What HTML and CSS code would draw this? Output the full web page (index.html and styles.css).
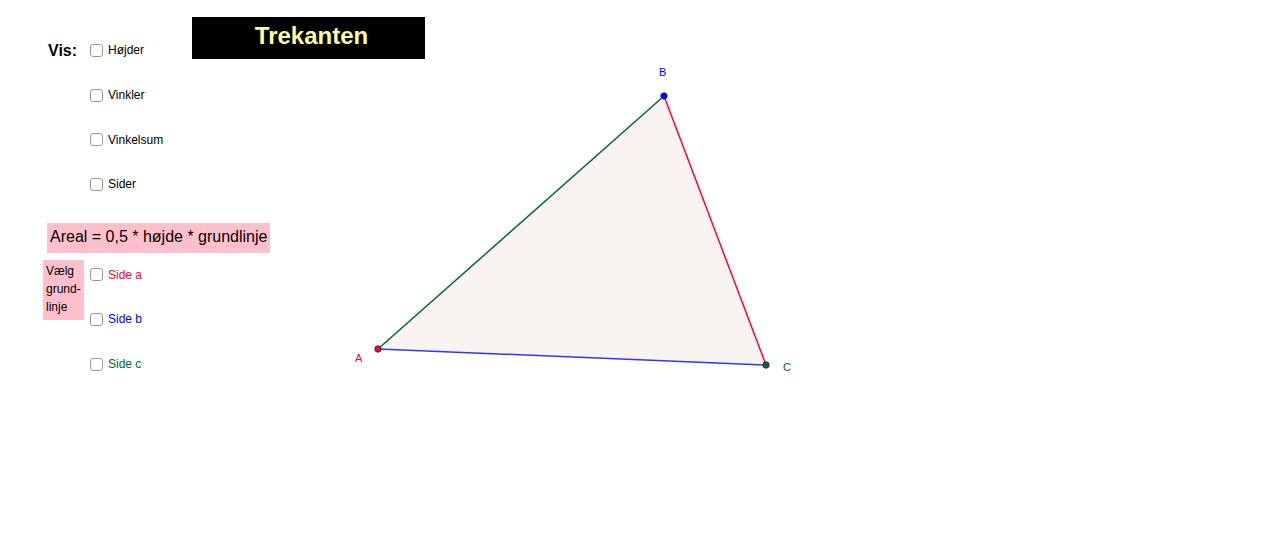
FILE: index.html
```html
<!DOCTYPE html>
<html lang="da">
<head>
<meta charset="utf-8">
<title>Trekanten</title>
<link rel="stylesheet" href="styles.css">
</head>
<body>
<div class="canvas">
  <div class="panel">
    <div class="vis-row">
      <div class="vis-label">Vis:</div>
      <div class="checklist">
        <label class="cb-row"><span class="box"></span><span class="cb-text">Højder</span></label>
        <label class="cb-row"><span class="box"></span><span class="cb-text">Vinkler</span></label>
        <label class="cb-row"><span class="box"></span><span class="cb-text">Vinkelsum</span></label>
        <label class="cb-row"><span class="box"></span><span class="cb-text">Sider</span></label>
      </div>
    </div>
    <div class="formula">Areal = 0,5 * højde * grundlinje</div>
    <div class="base-row">
      <div class="base-label">Vælg<br>grund-<br>linje</div>
      <div class="checklist sides">
        <label class="cb-row"><span class="box"></span><span class="cb-text red">Side a</span></label>
        <label class="cb-row"><span class="box"></span><span class="cb-text blue">Side b</span></label>
        <label class="cb-row"><span class="box"></span><span class="cb-text green">Side c</span></label>
      </div>
    </div>
  </div>
  <div class="title">Trekanten</div>
  <svg class="figure" width="1280" height="548" viewBox="0 0 1280 548">
    <polygon points="378,349 664,96 766,365" fill="#f9f4f2" stroke="none"/>
    <line x1="378" y1="349" x2="664" y2="96" stroke="#006633" stroke-width="1.5"/>
    <line x1="664" y1="96" x2="766" y2="365" stroke="#ff0033" stroke-width="1.5"/>
    <line x1="766" y1="365" x2="378" y2="349" stroke="#3333ff" stroke-width="1.5"/>
    <circle cx="378" cy="349" r="3.2" fill="#ff0033" stroke="#333" stroke-width="1"/>
    <circle cx="664" cy="96" r="3.2" fill="#0000ff" stroke="#333" stroke-width="1"/>
    <circle cx="766" cy="365" r="3.2" fill="#006633" stroke="#333" stroke-width="1"/>
    <text x="659" y="76" class="pt-label" fill="#0000ff">B</text>
    <text x="355" y="362" class="pt-label" fill="#ff0033">A</text>
    <text x="783" y="371" class="pt-label" fill="#006633">C</text>
  </svg>
</div>
</body>
</html>
```
FILE: styles.css
```css
html, body {
  margin: 0;
  padding: 0;
  background: #ffffff;
}
body {
  font-family: "Liberation Sans", Arial, sans-serif;
  color: #000;
}
.canvas {
  position: relative;
  width: 1280px;
  height: 548px;
  overflow: hidden;
}
.panel {
  display: flex;
  flex-direction: column;
  padding-top: 27.6px;
}
.vis-row {
  display: flex;
  align-items: flex-start;
}
.vis-label {
  width: 42px;
  margin-left: 48px;
  height: 44.67px;
  line-height: 46px;
  font-size: 16px;
  font-weight: bold;
}
.checklist {
  display: flex;
  flex-direction: column;
}
.cb-row {
  display: flex;
  align-items: center;
  height: 44.67px;
  gap: 4px;
}
.box {
  flex: none;
  width: 11px;
  height: 11px;
  border: 1.5px solid #9a9a9a;
  border-radius: 3px;
  background: #fff;
  margin-top: 1px;
}
.cb-text {
  font-size: 12px;
  line-height: 14px;
  margin-top: 1px;
  margin-left: 1px;
}
.red { color: #ff0033; }
.blue { color: #0000ff; }
.green { color: #006633; }
.formula {
  margin-top: 16.7px;
  margin-left: 47px;
  width: 220px;
  height: 30px;
  padding-left: 3px;
  background: #ffc0cb;
  font-size: 16px;
  line-height: 28px;
  white-space: nowrap;
}
.base-row {
  display: flex;
  align-items: flex-start;
  margin-top: -1px;
}
.base-label {
  margin-left: 43px;
  margin-top: 8px;
  padding-left: 3px;
  padding-top: 2px;
  box-sizing: border-box;
  height: 60px;
  width: 41px;
  background: #ffc0cb;
  font-size: 12px;
  line-height: 18px;
  white-space: nowrap;
}
.sides {
  margin-left: 6px;
}
.title {
  position: absolute;
  left: 192px;
  top: 17px;
  width: 233px;
  height: 42px;
  background: #000;
  color: #ffff99;
  font-size: 24px;
  font-weight: bold;
  text-align: center;
  line-height: 38px;
  padding-left: 6px;
  box-sizing: border-box;
}
.figure {
  position: absolute;
  left: 0;
  top: 0;
}
.pt-label {
  font-family: "Liberation Sans", Arial, sans-serif;
  font-size: 11px;
}
```
